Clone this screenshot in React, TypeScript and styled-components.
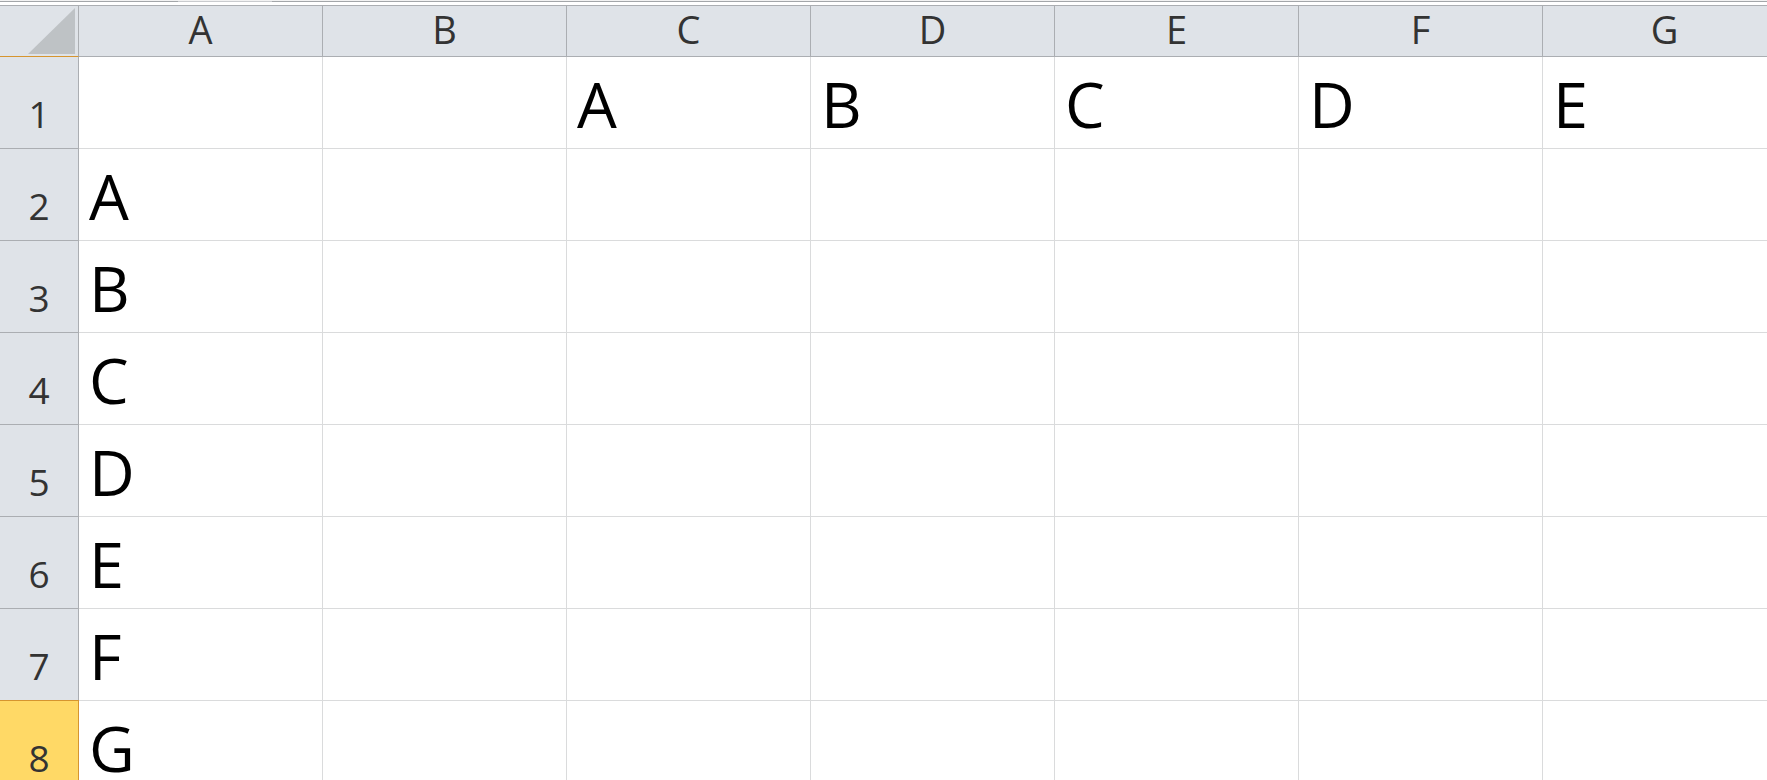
import React from 'react';
import styled, {createGlobalStyle} from 'styled-components';

const GlobalStyle = createGlobalStyle`
  html, body {
    margin: 0;
    padding: 0;
    background: #ffffff;
    overflow: hidden;
  }
  body {
    font-family: "Open Sans", "Liberation Sans", sans-serif;
  }
`;

const COL_WIDTH = 244;
const ROW_HEIGHT = 92;
const HEAD_BG = '#dfe3e8';
const HEAD_LINE = '#abaeb2';
const GRID_LINE = '#dadbdc';
const SELECT_LINE = '#d6952f';

const Sheet = styled.div`
  width: 1767px;
  height: 780px;
  overflow: hidden;
  display: flex;
  flex-direction: column;
`;

const TopStrip = styled.div`
  flex-shrink: 0;
  height: 5px;
  display: flex;
  align-items: flex-start;
  border-top: 1px solid #f2f2f2;
  box-sizing: border-box;
  background: #ffffff;
  position: relative;
  &::before {
    content: '';
    position: absolute;
    left: 0;
    right: 0;
    top: 0;
    height: 1px;
    background: #a3a6a9;
  }
`;

const Thumb = styled.div`
  margin-left: 178px;
  width: 94px;
  height: 1px;
  background: #c9cbce;
  position: relative;
  z-index: 1;
`;

const Grid = styled.div`
  flex-shrink: 0;
  display: grid;
  grid-template-columns: 79px repeat(7, ${COL_WIDTH}px);
  grid-template-rows: 52px repeat(8, ${ROW_HEIGHT}px);
`;

const Corner = styled.div`
  background: ${HEAD_BG};
  border-top: 1px solid ${HEAD_LINE};
  border-right: 1px solid ${HEAD_LINE};
  border-bottom: 1px solid ${SELECT_LINE};
  box-sizing: border-box;
  display: flex;
  align-items: flex-end;
  justify-content: flex-end;
  padding: 0 3px 2px 0;
`;

const ColHead = styled.div`
  background: ${HEAD_BG};
  border-top: 1px solid ${HEAD_LINE};
  border-right: 1px solid ${HEAD_LINE};
  border-bottom: 1px solid ${HEAD_LINE};
  box-sizing: border-box;
  display: flex;
  align-items: flex-end;
  justify-content: center;
  padding-bottom: 8px;
  font-size: 38px;
  line-height: 1;
  color: #333333;
`;

const RowHead = styled.div<{$selected?: boolean}>`
  background: ${({$selected}) => ($selected ? '#ffd966' : HEAD_BG)};
  border-right: 1px solid ${({$selected}) => ($selected ? SELECT_LINE : HEAD_LINE)};
  border-bottom: 1px solid ${HEAD_LINE};
  box-shadow: ${({$selected}) => ($selected ? `0 -1px 0 ${SELECT_LINE}` : 'none')};
  box-sizing: border-box;
  display: flex;
  align-items: flex-end;
  justify-content: center;
  padding-bottom: 16px;
  font-size: 37px;
  line-height: 1;
  color: #333333;
`;

const Cell = styled.div`
  border-right: 1px solid ${GRID_LINE};
  border-bottom: 1px solid ${GRID_LINE};
  box-sizing: border-box;
  display: flex;
  align-items: flex-end;
  padding: 0 0 13px 10px;
  font-size: 63px;
  line-height: 1;
  color: #000000;
  white-space: nowrap;
  overflow: hidden;
`;

const columns = ['A', 'B', 'C', 'D', 'E', 'F', 'G'];
const letters = ['A', 'B', 'C', 'D', 'E', 'F', 'G'];

function cellValue(row: number, col: number): string {
  // row 1 holds A..E from column C onward, column A holds A..G from row 2
  if (row === 1 && col >= 2) return letters[col - 2] ?? '';
  if (col === 0 && row >= 2) return letters[row - 2] ?? '';
  return '';
}

export default function App() {
  const rows = [1, 2, 3, 4, 5, 6, 7, 8];
  return (
    <>
      <GlobalStyle />
      <Sheet>
        <TopStrip>
          <Thumb />
        </TopStrip>
        <Grid>
          <Corner>
            <svg width="47" height="46" viewBox="0 0 47 46">
              <polygon points="47,0 47,46 0,46" fill="#bec2c5" />
            </svg>
          </Corner>
          {columns.map((c) => (
            <ColHead key={c}>{c}</ColHead>
          ))}
          {rows.map((r) => (
            <React.Fragment key={r}>
              <RowHead $selected={r === 8}>{r}</RowHead>
              {columns.map((c, ci) => (
                <Cell key={c}>{cellValue(r, ci)}</Cell>
              ))}
            </React.Fragment>
          ))}
        </Grid>
      </Sheet>
    </>
  );
}
